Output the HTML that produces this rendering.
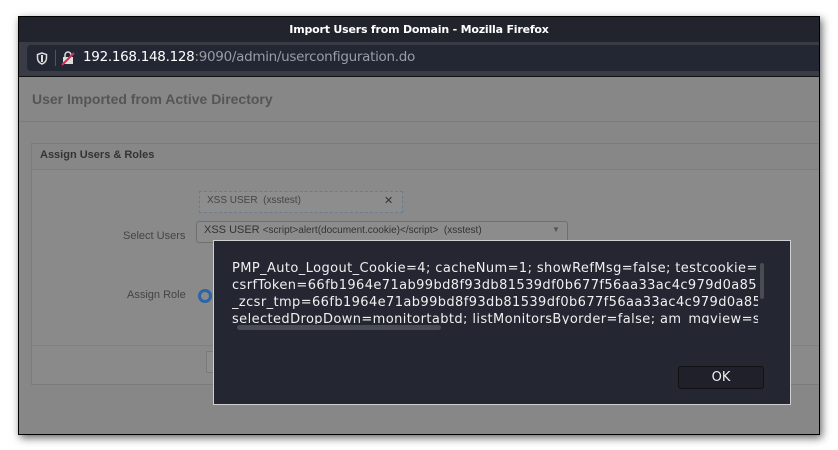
<!DOCTYPE html>
<html><head><style>
body{margin:0;width:838px;height:450px;background:#fff;position:relative;overflow:hidden;font-family:"Liberation Sans",sans-serif}
.win{position:absolute;left:18px;top:16px;width:800px;height:417px;background:#878787;border:1px solid #000;box-shadow:2px 3px 8px rgba(0,0,0,.6);overflow:hidden}
.title{position:absolute;left:0;top:0;width:100%;height:25px;background:#22242d;color:#fff;font:bold 11px "DejaVu Sans",sans-serif;text-align:center;line-height:25px;letter-spacing:-0.2px}
.tb{position:absolute;left:0;top:25px;width:100%;height:34px;background:#3a3c45}
.url{position:absolute;left:8px;top:3px;right:0;height:26px;background:#232733;border-radius:4px 0 0 4px}
.url span{position:absolute;left:56px;top:4px;font:13.5px "DejaVu Sans",sans-serif;color:#fff;letter-spacing:-0.3px}
.content{position:absolute;left:0;top:59px;width:100%;bottom:0;background:#878787;border-top:1px solid #111}
.t{position:absolute;color:#444;font-size:12px}
</style></head><body>
<div class="win">
 <div class="title">Import Users from Domain - Mozilla Firefox</div>
 <div class="tb"><div class="url">
  <svg style="position:absolute;left:9px;top:7px" width="12" height="13" viewBox="0 0 12 13"><path d="M6 1L1.5 2.5V6c0 3 2 5 4.5 6 2.5-1 4.5-3 4.5-6V2.5z" fill="none" stroke="#ddd" stroke-width="1.5"/><path d="M6 3v7" stroke="#ddd" stroke-width="2"/></svg>
  <div style="position:absolute;left:28px;top:5px;width:1px;height:16px;background:#555"></div>
  <svg style="position:absolute;left:34px;top:6px" width="15" height="15" viewBox="0 0 15 15"><rect x="2" y="6" width="10" height="7" fill="#ddd"/><path d="M4 6V4a3 3 0 016 0v2" fill="none" stroke="#ddd" stroke-width="1.5"/><path d="M1 14L13 2" stroke="#e22850" stroke-width="2"/></svg>
  <span>192.168.148.128<span style="position:static;color:#9a9ca5">:9090/admin/userconfiguration.do</span></span>
 </div></div>
 <div class="content">
  <div class="t" style="left:13px;top:14px;font-size:14px;font-weight:bold;color:#555">User Imported from Active Directory</div>
  <div style="position:absolute;left:0;top:44px;width:100%;height:1px;background:#7c7c7c"></div>
  <div style="position:absolute;left:12px;top:66px;width:800px;height:240px;border:1px solid #7b7b7b;background:#8a8a8a">
   <div style="height:25px;border-bottom:1px solid #7e7e7e;background:#878787"></div>
   <div class="t" style="left:8px;top:5px;font-weight:bold;color:#333;font-size:11px">Assign Users &amp; Roles</div>
   <div style="position:absolute;left:167px;top:47px;width:202px;height:20px;border:1px dashed #6b7c8c;background:#8d8d8d"></div>
   <div class="t" style="left:175px;top:51px;font-size:10px">XSS USER &nbsp;(xsstest)</div>
   <div class="t" style="left:352px;top:50px;font-size:11px;color:#333">✕</div>
   <div class="t" style="left:91px;top:86px;font-size:11px">Select Users</div>
   <div style="position:absolute;left:164px;top:77px;width:370px;height:20px;border:1px solid #6f6f6f;border-radius:3px;background:#8c8c8c"></div>
   <div class="t" style="left:172px;top:80px;font-size:11px;color:#333">XSS USER <span style="font-size:10px">&lt;script&gt;alert(document.cookie)&lt;/script&gt; &nbsp;(xsstest)</span></div>
   <div class="t" style="left:520px;top:81px;font-size:8px;color:#555">▼</div>
   <div class="t" style="left:95px;top:145px;font-size:11px">Assign Role</div>
   <div style="position:absolute;left:166px;top:145px;width:8px;height:8px;border:3px solid #2d64a6;border-radius:50%"></div>
   <div style="position:absolute;left:0;top:201px;width:100%;height:1px;background:#808080"></div>
   <div style="position:absolute;left:174px;top:207px;width:40px;height:20px;border:1px solid #7a7a7a;background:#8e8e8e"></div>
  </div>
 </div>
</div>
<div style="position:absolute;left:213px;top:240px;width:576px;height:163px;background:#242631;border:1px solid #cfcfcf">
 <div style="position:absolute;left:18px;top:19px;width:526px;height:69px;overflow:hidden;font:13px/17px 'DejaVu Sans',sans-serif;color:#f0f0f0;white-space:nowrap;letter-spacing:0.4px">PMP_Auto_Logout_Cookie=4; cacheNum=1; showRefMsg=false; testcookie=<br>csrfToken=66fb1964e71ab99bd8f93db81539df0b677f56aa33ac4c979d0a85<br>_zcsr_tmp=66fb1964e71ab99bd8f93db81539df0b677f56aa33ac4c979d0a85<br>selectedDropDown=monitortabtd; listMonitorsByorder=false; am_mgview=s</div>
 <div style="position:absolute;left:18px;top:83px;width:526px;height:8px;background:#242631"></div>
 <div style="position:absolute;left:23px;top:84px;width:204px;height:5px;border-radius:3px;background:#4a4c55"></div>
 <div style="position:absolute;left:546px;top:22px;width:4px;height:36px;border-radius:2px;background:#4a4c55"></div>
 <div style="position:absolute;left:464px;top:125px;width:84px;height:21px;border:1px solid #111;border-radius:3px;background:#1f2029;color:#eee;font:13px 'DejaVu Sans',sans-serif;text-align:center;line-height:21px">OK</div>
</div>
</body></html>
